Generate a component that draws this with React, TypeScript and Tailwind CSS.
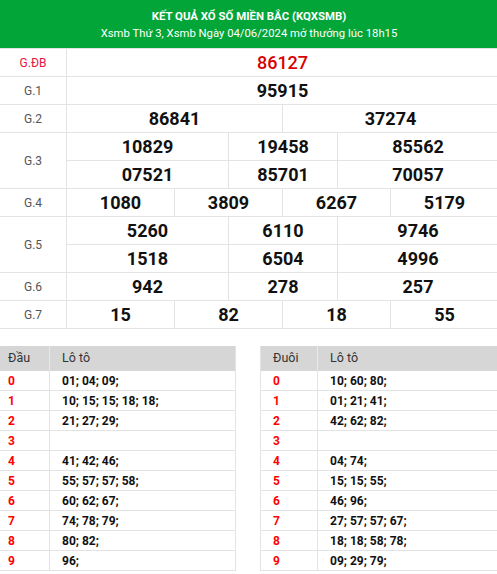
import type { ReactNode } from "react";

const FONT = { fontFamily: "Roboto, 'Noto Sans', sans-serif" };

const DAU = [
  "01; 04; 09;",
  "10; 15; 15; 18; 18;",
  "21; 27; 29;",
  "",
  "41; 42; 46;",
  "55; 57; 57; 58;",
  "60; 62; 67;",
  "74; 78; 79;",
  "80; 82;",
  "96;",
];

const DUOI = [
  "10; 60; 80;",
  "01; 21; 41;",
  "42; 62; 82;",
  "",
  "04; 74;",
  "15; 15; 55;",
  "46; 96;",
  "27; 57; 57; 67;",
  "18; 18; 58; 78;",
  "09; 29; 79;",
];

function Num({ children, red }: { children: ReactNode; red?: boolean }) {
  return (
    <span
      className={
        red
          ? "text-[18px] font-medium text-[#d80000]"
          : "text-[18px] font-bold text-[#111]"
      }
    >
      {children}
    </span>
  );
}

// widths include the right border of each cell
const W2 = ["w-[216px]"];
const W3 = ["w-[162px]", "w-[109px]"];
const W4 = ["w-[108px]", "w-[108px]", "w-[108px]"];

function Cells({ nums, widths, red }: { nums: string[]; widths: string[]; red?: boolean }) {
  return (
    <div className="flex h-[28px] border-b border-[#e3e3e3]">
      {nums.map((n, i) => (
        <div
          key={i}
          className={
            i < widths.length
              ? `${widths[i]} flex items-center justify-center border-r border-[#e3e3e3]`
              : "flex flex-1 items-center justify-center"
          }
        >
          <Num red={red}>{n}</Num>
        </div>
      ))}
    </div>
  );
}

function Prize({
  label,
  rows,
  widths,
  red,
}: {
  label: string;
  rows: string[][];
  widths: string[];
  red?: boolean;
}) {
  return (
    <div className="flex">
      <div
        className={`flex w-[67px] shrink-0 items-center justify-center border-r border-b border-[#e3e3e3] text-[12px] ${
          red ? "text-[#e3173f]" : "text-[#555]"
        }`}
      >
        {label}
      </div>
      <div className="flex-1">
        {rows.map((r, i) => (
          <Cells key={i} nums={r} widths={widths} red={red} />
        ))}
      </div>
    </div>
  );
}

function LotoTable({ head, data, wide }: { head: string; data: string[]; wide?: boolean }) {
  return (
    <div
      className={`${wide ? "w-[250px] border-l" : "w-[236px] border-r"} shrink-0 border-[#e3e3e3]`}
    >
      <div className="flex h-[25px] bg-[#d6d6d6] text-[12.5px] text-[#333]">
        <div
          className={`${wide ? "w-[57px] pl-[12px]" : "w-[50px] pl-[8px]"} flex items-center border-r border-[#e8e8e8]`}
        >
          {head}
        </div>
        <div className="flex flex-1 items-center pl-[12px]">Lô tô</div>
      </div>
      {data.map((v, i) => (
        <div key={i} className="flex h-[20px] border-b border-[#e3e3e3] text-[12px]">
          <div
            className={`${wide ? "w-[57px] pl-[12px]" : "w-[50px] pl-[8px]"} flex items-center border-r border-[#e3e3e3] font-bold text-[#f00]`}
          >
            {i}
          </div>
          <div className="flex flex-1 items-center pl-[12px] font-bold text-[#111]">{v}</div>
        </div>
      ))}
    </div>
  );
}

export default function App() {
  return (
    <div className="h-[574px] w-[497px] overflow-hidden bg-white" style={FONT}>
      <div className="w-[498px]">
        <div className="flex h-[48px] flex-col items-center justify-center bg-[#02a638] text-white">
          <div className="mt-[1px] text-[11.4px] leading-[16px] font-bold">KẾT QUẢ XỔ SỐ MIỀN BẮC (KQXSMB)</div>
          <div className="mt-[2px] text-[11.3px] leading-[16px]">
            Xsmb Thứ 3, Xsmb Ngày 04/06/2024 mở thưởng lúc 18h15
          </div>
        </div>
        <div className="border-t border-[#e3e3e3]">
          <Prize label="G.ĐB" rows={[["86127"]]} widths={[]} red />
          <Prize label="G.1" rows={[["95915"]]} widths={[]} />
          <Prize label="G.2" rows={[["86841", "37274"]]} widths={W2} />
          <Prize
            label="G.3"
            rows={[
              ["10829", "19458", "85562"],
              ["07521", "85701", "70057"],
            ]}
            widths={W3}
          />
          <Prize label="G.4" rows={[["1080", "3809", "6267", "5179"]]} widths={W4} />
          <Prize
            label="G.5"
            rows={[
              ["5260", "6110", "9746"],
              ["1518", "6504", "4996"],
            ]}
            widths={W3}
          />
          <Prize label="G.6" rows={[["942", "278", "257"]]} widths={W3} />
          <Prize label="G.7" rows={[["15", "82", "18", "55"]]} widths={W4} />
        </div>
        <div className="mt-[17px] flex gap-[24px]">
          <LotoTable head="Đầu" data={DAU} />
          <LotoTable head="Đuôi" data={DUOI} wide />
        </div>
      </div>
    </div>
  );
}
